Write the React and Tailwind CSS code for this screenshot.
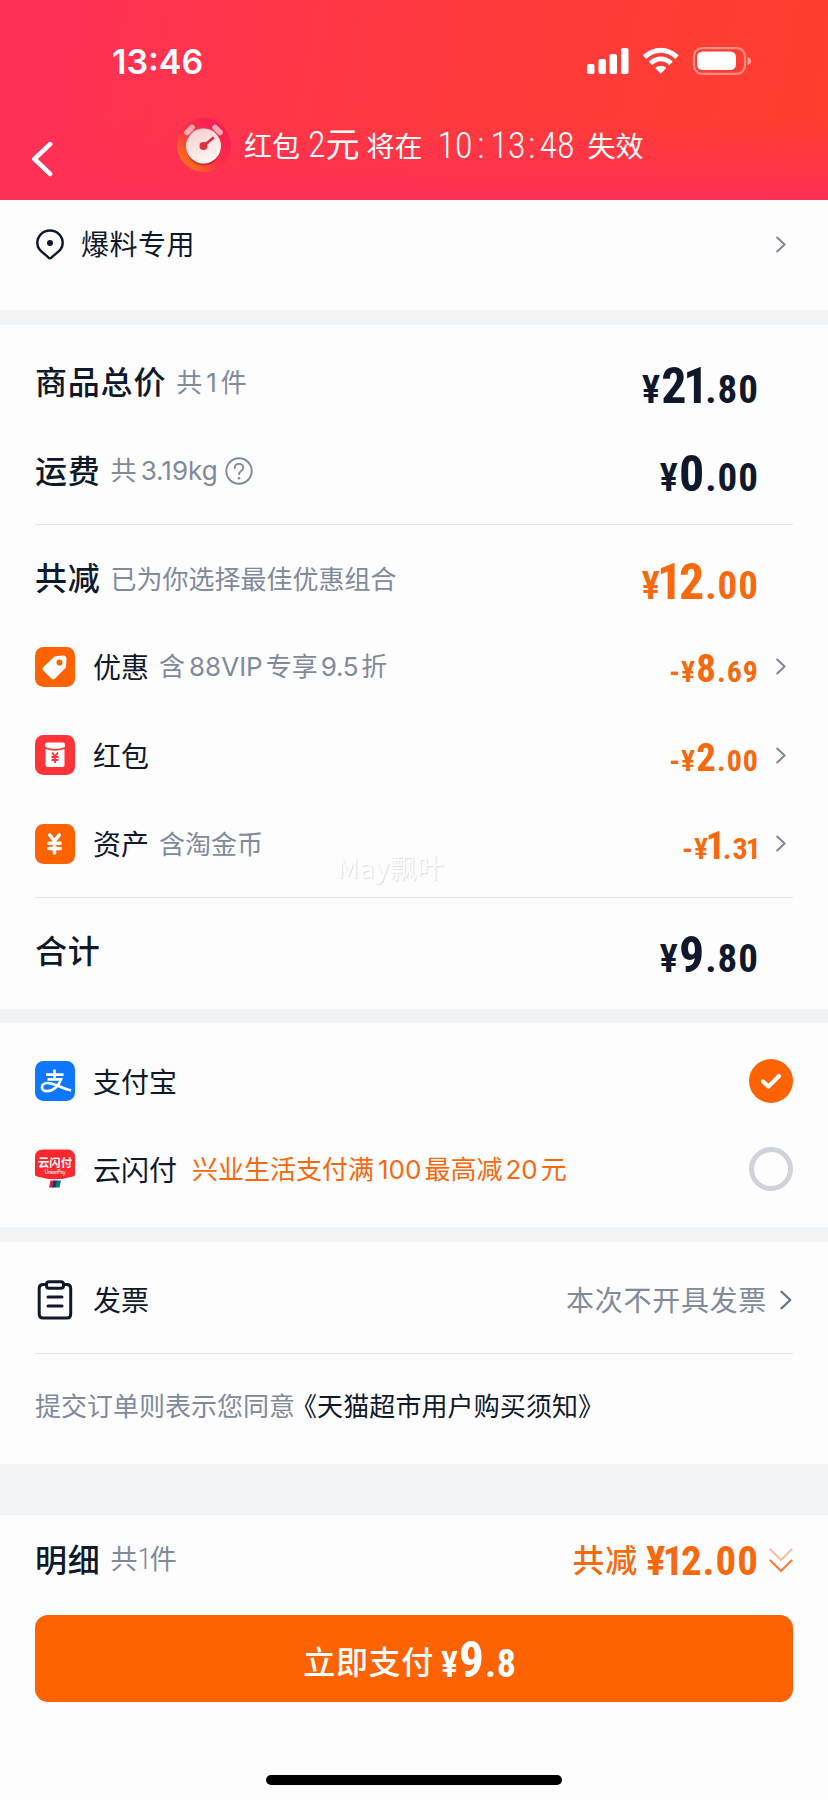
const Chevron = ({ className = 'w-[10px] h-[17px]', width = 2 }) => (
  <svg className={className} viewBox="0 0 10 17" fill="none" stroke="currentColor" strokeWidth={width} strokeLinecap="round" strokeLinejoin="round">
    <path d="M1.2 1.5L8.6 8.5L1.2 15.5" />
  </svg>
);

const StatusIcons = () => (
  <svg className="w-[166px] h-[28px]" viewBox="0 0 166 28" fill="white">
    {/* Signal */}
    <rect x="0" y="17" width="7.500" height="10" rx="2" />
    <rect x="11.5" y="12" width="7.5" height="15" rx="2" />
    <rect x="22.5" y="7" width="7.5" height="20" rx="2" />
    <rect x="34" y="1" width="7.5" height="26" rx="2" />
    {/* Wifi */}
    <g fill="none" stroke="white" strokeWidth="5">
      <path d="M57.5 10.2C67.5 1 80 1 90 10.2" />
      <path d="M63.4 16.3C70 10.5 77.500 10.5 84.1 16.3" />
    </g>
    <path d="M68.200 21C71.500 18 76 18 79.300 21L73.700 26.800Z" />
    {/* Battery */}
    <rect x="107" y="1.200" width="51" height="25.600" rx="8" fill="none" stroke="white" strokeOpacity="0.42" strokeWidth="2.2" />
    <rect x="110" y="4.500" width="39" height="18.500" rx="5.500" />
    <path d="M160.500 10C165.500 11.500 165.500 16.500 160.500 18Z" fillOpacity="0.5" />
  </svg>
);

const ClockIcon = () => (
  <svg className="w-[56px] h-[56px]" viewBox="0 0 56 56">
    <defs>
      <linearGradient id="clockRing" x1="0.1" y1="0.85" x2="0.75" y2="0.25">
        <stop offset="0" stopColor="#ff7416" />
        <stop offset="0.5" stopColor="#fb3248" />
        <stop offset="1" stopColor="#f92052" />
      </linearGradient>
      <linearGradient id="clockFace" x1="0.2" y1="0" x2="0.7" y2="1">
        <stop offset="0" stopColor="#f9cfcf" />
        <stop offset="1" stopColor="#fff8f6" />
      </linearGradient>
    </defs>
    <circle cx="28" cy="28" r="27" fill="url(#clockRing)" />
    <circle cx="27.500" cy="31.500" r="17" fill="#9f101f" opacity="0.5" />
    <path d="M11 15.500L16 10.500M39 10.500L44 15.500" stroke="#ffabb0" strokeWidth="5.500" strokeLinecap="round" />
    <circle cx="27.500" cy="29" r="17.500" fill="url(#clockFace)" />
    <path d="M27.500 29L37 21" stroke="#d4303d" strokeWidth="2.600" strokeLinecap="round" />
    <circle cx="27.500" cy="29" r="4" fill="#e02f40" />
  </svg>
);

const PinIcon = () => (
  <svg className="w-[28px] h-[31px]" viewBox="0 0 28 31" fill="none" stroke="currentColor" strokeWidth="2.500" strokeLinejoin="round">
    <path d="M14 1.400C7 1.400 1.300 7 1.300 14C1.300 21 7.500 23.500 12.500 28.600Q14 30 15.500 28.600C20.500 23.500 26.700 21 26.700 14C26.700 7 21 1.400 14 1.400Z" />
    <circle cx="14" cy="14" r="3" fill="currentColor" stroke="none" />
  </svg>
);

const TagIcon = () => (
  <svg className="w-10 h-10 shrink-0" viewBox="0 0 40 40">
    <rect width="40" height="40" rx="8.500" fill="#ff6200" />
    <path d="M19.500 9.500L27.500 8.500Q31.600 8.300 31.500 12.200L31 19.500Q30.900 20.700 30 21.600L20 31.600Q18.200 33.300 16.400 31.600L8.200 23.500Q6.500 21.700 8.300 20Z" fill="white" />
    <circle cx="24.500" cy="15.500" r="3" fill="#ff6200" />
  </svg>
);

const EnvelopeIcon = () => (
  <svg className="w-10 h-10 shrink-0" viewBox="0 0 40 40">
    <rect width="40" height="40" rx="8.500" fill="#ff3338" />
    <path d="M10 12V9.500Q10 7.500 12 7.500H28Q30 7.500 30 9.500V12Q20 16 10 12Z" fill="white" />
    <path d="M10.500 14Q20 17.500 29.500 14V30Q29.500 32 27.500 32H12.500Q10.500 32 10.500 30Z" fill="white" />
    <path d="M17 17.500L20 21.300L23 17.500M20 21V28M16.500 22H23.500M16.500 25H23.500" stroke="#ff3338" strokeWidth="1.800" fill="none" />
  </svg>
);

const CoinIcon = () => (
  <svg className="w-10 h-10 shrink-0" viewBox="0 0 40 40">
    <rect width="40" height="40" rx="8.500" fill="#ff6200" />
    <path d="M14.800 11L19.500 17L24.200 11M19.500 17V29M13.800 19.200H25.200M13.800 24.500H25.200" stroke="white" strokeWidth="3.600" strokeLinecap="round" fill="none" />
  </svg>
);

const AlipayIcon = () => (
  <svg className="w-10 h-10 shrink-0" viewBox="0 0 40 40" fill="none" stroke="white">
    <rect width="40" height="40" rx="8.500" fill="#0d78ff" stroke="none" />
    <path d="M11 13.600H28.500M19.500 8.500V18.500" strokeWidth="2.600" />
    <path d="M12.500 18.300H26C24 24.500 18.500 30.200 12 30.200C5 30.200 5.500 22 12.500 22C18.500 22 25 26.500 36 29.500" strokeWidth="2.700" />
  </svg>
);

const UnionPayIcon = () => (
  <svg className="w-10 h-10 shrink-0" viewBox="0 0 40 40">
    <path d="M0 8Q0 0.500 8 0.500H32Q40 0.500 40 8V25.500Q40 27 38 27.600Q20 33 2 27.600Q0 27 0 25.500Z" fill="#f9282d" />
    <text x="20" y="17.500" textAnchor="middle" fontSize="11.500" fontWeight="700" fill="white" textLength="34" lengthAdjust="spacingAndGlyphs">云闪付</text>
    <text x="20" y="24.500" textAnchor="middle" fontSize="5.500" fill="white" textLength="21">UnionPay</text>
    <path d="M15.500 31.500H19.500L18 38.500H14Z" fill="#d9203f" />
    <path d="M18.500 31.500H22.500L21 38.500H17Z" fill="#0c3d6e" />
    <path d="M22 31.500H26L24.500 38.500H20.500Z" fill="#0b7a80" />
  </svg>
);

const InvoiceIcon = () => (
  <svg className="w-10 h-10 shrink-0" viewBox="0 0 40 40" fill="none" stroke="#10182b" strokeWidth="3" strokeLinecap="round" strokeLinejoin="round">
    <path d="M11 4.500H8Q4.200 4.500 4.200 8.500V34Q4.200 38 8 38H32Q35.700 38 35.700 34V8.500Q35.700 4.500 32 4.500H29" />
    <rect x="11.500" y="1.800" width="17" height="6.500" rx="2.500" />
    <path d="M13 17H27M13 26H27" />
  </svg>
);

const HelpIcon = () => (
  <svg className="w-[28px] h-[28px]" viewBox="0 0 28 28" fill="none" stroke="currentColor" strokeWidth="1.900" strokeLinecap="round">
    <circle cx="14" cy="14" r="12.700" />
    <path d="M9.800 11C9.800 5.500 18.300 5.500 18.300 10.800C18.300 14 14 14 14 17.300" />
    <circle cx="14" cy="21.300" r="1.300" fill="currentColor" stroke="none" />
  </svg>
);

// The digit 1 sits tighter than the other figures
const Digits = ({ text }) =>
  text.split('').map((char, index) => (
    <span key={index} className={char === '1' || text[index + 1] === '1' ? 'tracking-[-0.065em]' : ''}>{char}</span>
  ));

// Price with an enlarged integer part
const Price = ({ value, small }) => {
  const [whole, cents] = value.split('.');
  return (
    <span className={`flex items-baseline font-['Roboto'] font-bold leading-none [font-stretch:75%] ${small ? 'text-[30px] pt-[6px] tracking-[1px]' : 'text-[39px] pt-[7px] tracking-[1px]'}`}>
      {small && <span>-</span>}
      <span className={whole[0] === '1' ? 'font-semibold tracking-[-0.08em]' : 'font-semibold'}>¥</span>
      <span className={small ? 'text-[39px]' : 'text-[50px]'}><Digits text={whole} /></span>
      <span className="-mr-px"><Digits text={`.${cents}`} /></span>
    </span>
  );
};

const Row = ({ icon, label, note, value, discount, accent, children }) => (
  <div className="flex items-center h-[88.500px]">
    {icon && <span className="mr-[18px]">{icon}</span>}
    <span className={icon ? 'text-[28px] pb-px' : 'text-[32px] font-medium tracking-[0.8px] pb-[4px]'}>{label}</span>
    {note && <span className="ml-[10px] pb-[2px] text-[26px] text-[#7f8a9d]">{note}</span>}
    {children}
    <div className={`ml-auto flex items-center ${accent ? 'text-[#f7690f]' : ''}`}>
      <Price value={value} small={discount} />
      <span className="w-[35px] pl-[18px] text-[#7f8795]">{discount && <Chevron />}</span>
    </div>
  </div>
);

const Divider = () => <div className="h-px my-[9px] bg-[#dfe2e8]" />;

const App = () => {
  return (
    <div className="relative w-[828px] h-[1800px] flex flex-col overflow-hidden bg-[#f1f4f7] text-[#10182b] font-['Noto_Sans_CJK_SC',sans-serif] whitespace-nowrap">
      {/* Header */}
      <header className="h-[200px] shrink-0 text-white bg-[linear-gradient(to_bottom,transparent_60%,#ff3054_98%),linear-gradient(100deg,#ff3056_5%,#ff3a3d_55%,#ff3e2d_100%)]">
        <div className="flex items-center justify-between h-[60px] mt-[31px] pl-[112px] pr-[75px]">
          <span className="pt-[2px] font-['Inter'] font-semibold text-[34px] leading-none">13:46</span>
          <StatusIcons />
        </div>
        <div className="flex items-center h-[56px] mt-[26px] pl-[31px] text-[28px]">
          <Chevron className="w-[22px] h-[36px] rotate-180 mt-[27px]" width={2.2} />
          <span className="ml-[123px]"><ClockIcon /></span>
          <span className="ml-[12px]">红包</span>
          <span className="ml-[8px] pb-px text-[34px] leading-none"><span className="font-['Roboto'] [font-weight:350] [font-stretch:75%] text-[36px]">2</span>元</span>
          <span className="ml-[7px]">将在</span>
          <span className="flex items-center ml-[15px] pt-[2px] font-['Roboto'] [font-weight:350] [font-stretch:75%] text-[36px] leading-none">
            <span className="w-[29px]">10</span>
            <span className="w-[24px] pl-[4px] text-center">:</span>
            <span className="w-[29px]">13</span>
            <span className="w-[20px] pl-[4px] text-center">:</span>
            <span className="w-[34px]">48</span>
          </span>
          <span className="ml-[14px]">失效</span>
        </div>
      </header>

      {/* Address */}
      <section className="h-[110px] shrink-0 bg-[#fdfdfe] flex items-start px-[36px] pt-[23px]">
        <div className="flex flex-1 items-center h-[42px]">
          <PinIcon />
          <span className="ml-[17px] pb-[2px] text-[28px] tracking-[0.5px]">爆料专用</span>
          <span className="ml-auto mr-[6px] text-[#7f8795]"><Chevron /></span>
        </div>
      </section>

      {/* Price breakdown */}
      <section className="h-[684px] shrink-0 mt-[15px] px-[35px] pt-[13px] bg-[#fdfdfe]">
        <Row label="商品总价" note={<>共<span className="ml-[4px] mr-[4px] font-['Inter']">1</span>件</>} value="21.80" />
        <Row label="运费" note={<>共<span className="ml-[4px] font-['Inter']">3.19kg</span></>} value="0.00">
          <span className="ml-[7px] text-[#7f8a9d]"><HelpIcon /></span>
        </Row>
        <Divider />
        <Row label="共减" note="已为你选择最佳优惠组合" value="12.00" accent />
        <Row
          icon={<TagIcon />}
          label="优惠"
          note={<>含<span className="ml-[4px] mr-[3px] font-['Inter']">88VIP</span>专享<span className="mx-[3px] font-['Inter'] tracking-[-0.3px]">9.5</span>折</>}
          value="8.69"
          discount
          accent
        />
        <Row icon={<EnvelopeIcon />} label="红包" value="2.00" discount accent />
        <Row icon={<CoinIcon />} label="资产" note="含淘金币" value="1.31" discount accent />
        <Divider />
        <Row label="合计" value="9.80" />
      </section>

      {/* Payment methods */}
      <section className="h-[204px] shrink-0 mt-[14px] px-[35px] pt-[14px] bg-[#fdfdfe] text-[28px]">
        <div className="flex items-center h-[88px]">
          <AlipayIcon />
          <span className="ml-[18px]">支付宝</span>
          <span className="ml-auto w-[44px] h-[44px] rounded-full bg-[#ff6200] flex items-center justify-center">
            <svg className="w-[24px] h-[20px]" viewBox="0 0 24 20" fill="none" stroke="white" strokeWidth="4.200" strokeLinecap="round" strokeLinejoin="round">
              <path d="M4 10.500L9.500 15.500L20 5" />
            </svg>
          </span>
        </div>
        <div className="flex items-center h-[88px]">
          <UnionPayIcon />
          <span className="ml-[18px]">云闪付</span>
          <span className="ml-[15px] pb-[2px] text-[26px] text-[#f7690f]">
            兴业生活支付满<span className="ml-[4px] mr-[3px] font-['Inter']">100</span>最高减<span className="mx-[3px] font-['Inter']">20</span>元
          </span>
          <span className="ml-auto w-[44px] h-[44px] rounded-full border-[5px] border-[#cfd1db]" />
        </div>
      </section>

      {/* Invoice */}
      <section className="h-[222px] shrink-0 mt-[15px] px-[35px] pt-[14px] bg-[#fdfdfe]">
        <div className="flex items-center h-[88px] text-[28px]">
          <InvoiceIcon />
          <span className="ml-[18px] pb-[2px]">发票</span>
          <span className="ml-auto pb-[3px] text-[#7f8a9d] tracking-[0.7px]">本次不开具发票</span>
          <span className="ml-[13px] mr-px text-[#6b7485]"><Chevron className="w-[12px] h-[20px]" /></span>
        </div>
        <Divider />
        <p className="flex items-center h-[88px] pb-[5px] text-[26px]">
          <span className="text-[#7f8a9d]">提交订单则表示您同意</span>
          <span className="-ml-[4px] tracking-[0.1px]">《天猫超市用户购买须知》</span>
        </p>
      </section>

      {/* Checkout bar */}
      <footer className="h-[285px] shrink-0 mt-[51px] px-[35px] bg-[#fdfdfe] flex flex-col">
        <div className="flex items-center h-[90px]">
          <span className="pb-[4px] text-[32px] font-medium tracking-[0.8px]">明细</span>
          <span className="ml-[10px] pb-px text-[27px] text-[#7f8a9d]">共<span className="font-['Roboto'] font-light [font-stretch:75%] text-[29px] tracking-[-2px]">1</span>件</span>
          <span className="ml-auto pb-[4px] text-[32px] font-medium tracking-[0.8px] text-[#f7690f]">共减</span>
          <span className="ml-[8px] pt-[3px] font-['Roboto'] font-bold text-[41px] leading-none text-[#f7690f] [font-stretch:75%] tracking-[1px]">
            <Digits text="¥12.00" />
          </span>
          <svg className="ml-[10px] w-[24px] h-[27px]" viewBox="0 0 24 27" fill="none" strokeWidth="2.200" strokeLinecap="round">
            <path d="M1.500 2.500L12 13L22.500 2.500" stroke="#fbbd9c" />
            <path d="M1.500 13.500L12 24L22.500 13.500" stroke="#ee7d45" />
          </svg>
        </div>
        <button className="h-[87px] mt-[10px] pr-[8px] rounded-[13px] bg-[#ff6200] text-white flex items-center justify-center">
          <span className="pt-[3px] text-[32px] font-medium tracking-[0.700px]">立即支付</span>
          <span className="ml-[7px] pt-[3px] flex items-baseline font-['Roboto'] font-bold text-[38px] leading-none [font-stretch:75%] tracking-[0.8px]">
            <span className="text-[36px] font-semibold">¥</span>
            <span className="text-[50px]">9</span>
            <span>.8</span>
          </span>
        </button>
        <div className="mx-auto mt-[73px] w-[296px] h-[10px] rounded-full bg-black" />
      </footer>

      {/* Watermark */}
      <span className="absolute left-[337px] top-[847px] text-[27px] leading-[40px] tracking-[0.4px] text-[#fefefe] [text-shadow:1px_1px_1px_#dddde0]">May飘叶</span>
    </div>
  );
};

export default App;
